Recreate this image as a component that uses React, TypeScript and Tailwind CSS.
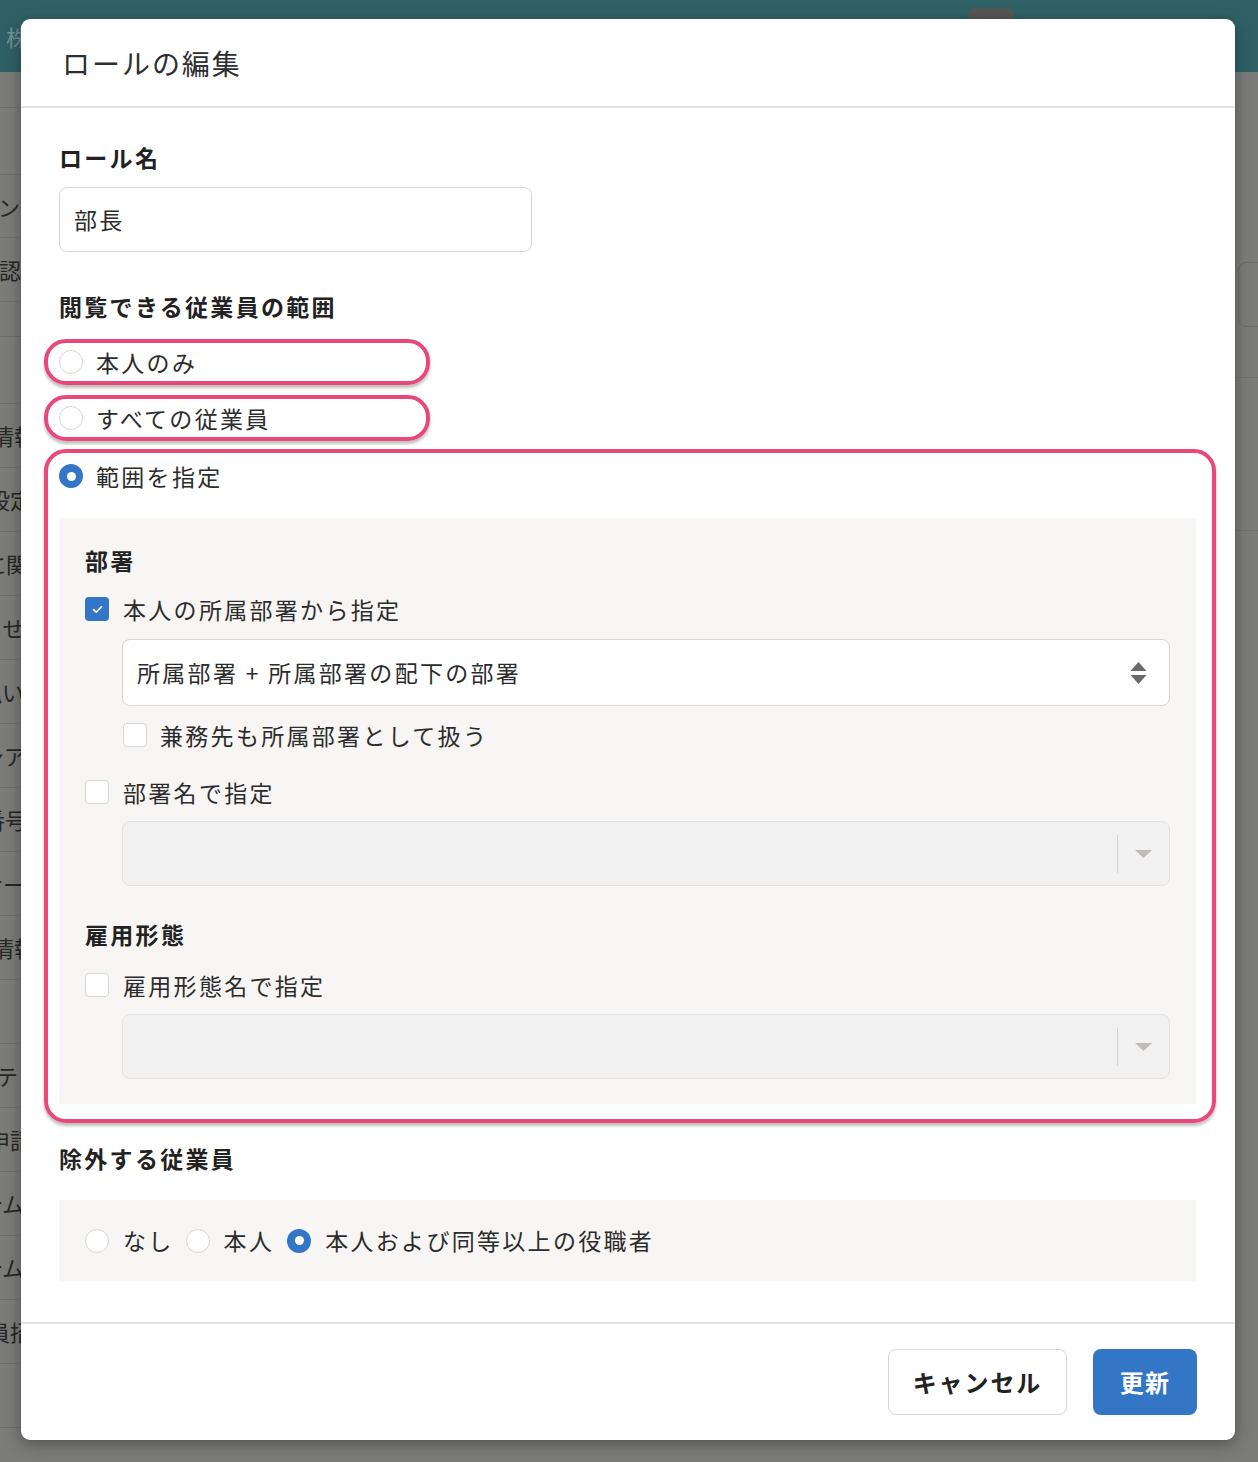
const sideRows = [
  { h: "h-[36px]", text: "" },
  { h: "h-[67px]", text: "" },
  { h: "h-[63px]", text: "ン", off: "ml-[-2px]" },
  { h: "h-[64px]", text: "認証", off: "ml-[-1px]" },
  { h: "h-[35px]", text: "" },
  { h: "h-[67px]", text: "" },
  { h: "h-[64px]", text: "情報", off: "ml-[-8px]" },
  { h: "h-[64px]", text: "設定", off: "ml-[-12px]" },
  { h: "h-[64px]", text: "に関", off: "ml-[-16px]" },
  { h: "h-[64px]", text: "らせ", off: "ml-[-19px]" },
  { h: "h-[64px]", text: "払い", off: "ml-[-20px]" },
  { h: "h-[64px]", text: "シア", off: "ml-[-18px]" },
  { h: "h-[64px]", text: "番号", off: "ml-[-17px]" },
  { h: "h-[64px]", text: "ナー", off: "ml-[-19px]" },
  { h: "h-[64px]", text: "情報", off: "ml-[-8px]" },
  { h: "h-[64px]", text: "" },
  { h: "h-[64px]", text: "ステン", off: "ml-[-26px]" },
  { h: "h-[64px]", text: "申請", off: "ml-[-12px]" },
  { h: "h-[64px]", text: "テム", off: "ml-[-19px]" },
  { h: "h-[64px]", text: "テム", off: "ml-[-19px]" },
  { h: "h-[64px]", text: "員招", off: "ml-[-12px]" },
  { h: "h-[64px]", text: "" },
];

function Radio({ checked = false }: { checked?: boolean }) {
  return checked ? (
    <span className="flex h-[24px] w-[24px] shrink-0 items-center justify-center rounded-full bg-[#3476c6]">
      <span className="block h-[9px] w-[9px] rounded-full bg-white" />
    </span>
  ) : (
    <span className="block h-[24px] w-[24px] shrink-0 rounded-full border-[1.5px] border-[#d8d6d3] bg-white" />
  );
}

function Checkbox({ checked = false }: { checked?: boolean }) {
  return checked ? (
    <span className="flex h-[24px] w-[24px] shrink-0 items-center justify-center rounded-[4px] bg-[#3476c6]">
      <svg width="11" height="9" viewBox="0 0 11 9" fill="none">
        <path d="M1.5 4.6L4.2 7.2L9.5 1.8" stroke="white" strokeWidth="1.6" strokeLinecap="round" strokeLinejoin="round" />
      </svg>
    </span>
  ) : (
    <span className="block h-[24px] w-[24px] shrink-0 rounded-[4px] border-[1.5px] border-[#d8d6d3] bg-white" />
  );
}

function Highlight({ cls }: { cls: string }) {
  return (
    <span
      className={`pointer-events-none absolute border-[4px] border-[#e8497a] shadow-[0_3px_3px_rgba(0,0,0,0.25)] ${cls}`}
    />
  );
}

function DisabledSelect() {
  return (
    <div className="ml-[37px] flex h-[65px] items-center justify-end rounded-[8px] border border-[#e2e1df] bg-[#f1f1f1]">
      <span className="h-[38px] w-px bg-[#d6d4d1]" />
      <svg className="mx-[17px]" width="17" height="8" viewBox="0 0 17 8">
        <path d="M0 0H17L8.5 8Z" fill="#c0bcb8" />
      </svg>
    </div>
  );
}

export default function App() {
  return (
    <div className="relative h-[1462px] w-full overflow-hidden bg-[#7b7b7a] font-['Noto_Sans_CJK_JP','Noto_Sans',sans-serif] text-[#2c2c2c]">
      {/* page behind the dialog, already dimmed */}
      <div className="flex h-[72px] bg-[#2f6164]">
        <span className="ml-[6px] mt-[20px] text-[22px] text-[#6f9295]">株</span>
        <span className="ml-[940px] mt-[8px] h-[12px] w-[46px] rounded-t-[6px] bg-[#565656]" />
      </div>
      <div className="flex">
        <div className="w-[230px] border-r border-[#6c6c6b]">
          {sideRows.map((r, i) => (
            <div key={i} className={`flex items-center overflow-hidden border-b border-[#6e6e6d] ${r.h}`}>
              {r.text && (
                <span className={`whitespace-nowrap text-[22px] text-[#262626] ${r.off ?? ""}`}>{r.text}</span>
              )}
            </div>
          ))}
        </div>
        <div className="flex flex-1 flex-col items-end">
          <div className="mr-[-20px] mt-[190px] h-[65px] w-[40px] rounded-[8px] border border-[#6a6a69]" />
          <div className="mt-[50px] h-px w-full bg-[#727271]" />
          <div className="mt-[152px] h-px w-full bg-[#727271]" />
        </div>
      </div>

      {/* dialog */}
      <div className="absolute left-[21px] top-[19px] flex h-[1421px] w-[1214px] flex-col rounded-[9px] bg-white shadow-[0_4px_16px_rgba(0,0,0,0.35)]">
        <div className="flex h-[89px] items-center border-b-2 border-[#e3e2e0] px-[41px]">
          <h1 className="text-[28px] tracking-[0.07em] text-[#2e2e2e]">ロールの編集</h1>
        </div>

        <div className="flex flex-1 flex-col px-[38px] pr-[39px] pt-[33px] text-[23px] tracking-[0.1em]">
          <div className="font-bold leading-[32px] text-[#222]">ロール名</div>
          <div className="mt-[14px] flex h-[65px] w-[473px] items-center rounded-[8px] border-[1.5px] border-[#d8d6d3] px-[14px]">
            部長
          </div>

          <div className="mt-[38px] font-bold leading-[32px] text-[#222]">閲覧できる従業員の範囲</div>

          <div className="relative mt-[17px] flex h-[46px] items-center gap-[13px]">
            <Highlight cls="-left-[15px] top-0 h-[46px] w-[386px] rounded-[22px]" />
            <Radio />
            <span>本人のみ</span>
          </div>
          <div className="relative mt-[10px] flex h-[46px] items-center gap-[13px]">
            <Highlight cls="-left-[15px] top-0 h-[46px] w-[386px] rounded-[22px]" />
            <Radio />
            <span>すべての従業員</span>
          </div>

          <div className="relative mt-[12px]">
            <Highlight cls="-left-[15px] -right-[20px] -top-[4px] -bottom-[19px] rounded-[22px]" />
            <div className="flex h-[46px] items-center gap-[13px]">
              <Radio checked />
              <span>範囲を指定</span>
            </div>
            <div className="mt-[19px] flex flex-col bg-[#f7f6f4] px-[26px] pb-[25px] pt-[26px]">
              <div className="font-bold leading-[32px] text-[#222]">部署</div>
              <div className="mt-[17px] flex h-[32px] items-center gap-[14px]">
                <Checkbox checked />
                <span>本人の所属部署から指定</span>
              </div>
              <div className="ml-[37px] mt-[14px] flex h-[67px] items-center justify-between rounded-[8px] border-[1.5px] border-[#d8d6d3] bg-white pl-[14px] pr-[22px]">
                <span>所属部署 + 所属部署の配下の部署</span>
                <svg width="17" height="22" viewBox="0 0 17 22">
                  <path d="M8.5 0L16.5 9H0.5Z" fill="#6b6a66" />
                  <path d="M0.5 13H16.5L8.5 22Z" fill="#6b6a66" />
                </svg>
              </div>
              <div className="ml-[38px] mt-[13px] flex h-[32px] items-center gap-[13px]">
                <Checkbox />
                <span>兼務先も所属部署として扱う</span>
              </div>
              <div className="mt-[25px] flex h-[32px] items-center gap-[14px]">
                <Checkbox />
                <span>部署名で指定</span>
              </div>
              <div className="mt-[13px]">
                <DisabledSelect />
              </div>

              <div className="mt-[32px] font-bold leading-[32px] text-[#222]">雇用形態</div>
              <div className="mt-[19px] flex h-[32px] items-center gap-[14px]">
                <Checkbox />
                <span>雇用形態名で指定</span>
              </div>
              <div className="mt-[13px]">
                <DisabledSelect />
              </div>
            </div>
          </div>

          <div className="mt-[38px] font-bold leading-[32px] text-[#222]">除外する従業員</div>
          <div className="mt-[26px] flex h-[81px] items-center bg-[#f7f6f4] px-[26px]">
            <Radio />
            <span className="ml-[14px]">なし</span>
            <span className="ml-[12px]">
              <Radio />
            </span>
            <span className="ml-[14px]">本人</span>
            <span className="ml-[13px]">
              <Radio checked />
            </span>
            <span className="ml-[14px]">本人および同等以上の役職者</span>
          </div>
        </div>

        <div className="flex h-[118px] items-center justify-end gap-[26px] border-t-2 border-[#e3e2e0] pr-[38px]">
          <button className="flex h-[66px] w-[179px] items-center justify-center rounded-[8px] border-[1.5px] border-[#d8d6d3] bg-white text-[24px] font-bold tracking-[0.08em] text-[#222]">
            キャンセル
          </button>
          <button className="flex h-[66px] w-[104px] items-center justify-center rounded-[8px] bg-[#3476c6] text-[24px] font-bold tracking-[0.05em] text-white">
            更新
          </button>
        </div>
      </div>
    </div>
  );
}
